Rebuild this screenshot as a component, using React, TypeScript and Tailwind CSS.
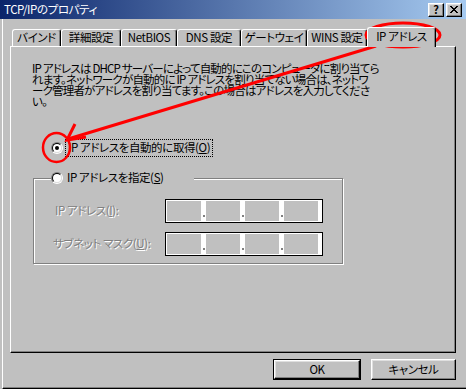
import React from "react";

const font = "font-['MS_UI_Gothic','Noto_Sans_CJK_JP',sans-serif] [font-feature-settings:'palt']";

const raised =
  "border border-t-white border-l-white border-r-black border-b-black shadow-[inset_-1px_-1px_0_#808080,inset_1px_1px_0_#dfdfdf]";

const tabs = [
  { label: "バインド", w: "w-[49px]" },
  { label: "詳細設定", w: "w-[60px]" },
  { label: "NetBIOS", w: "w-[56px]" },
  { label: "DNS 設定", w: "w-[64px]" },
  { label: "ゲートウェイ", w: "w-[66px]" },
  { label: "WINS 設定", w: "w-[60px]" },
];

function Tab({ label, w }: { label: string; w: string }) {
  return (
    <div
      className={`${w} h-[17px] border-t border-l border-r border-t-white border-l-white border-r-black shadow-[inset_-1px_0_0_#808080] rounded-t-[3px] flex items-center justify-center leading-none whitespace-nowrap`}
    >
      {label}
    </div>
  );
}

function Radio({ checked }: { checked?: boolean }) {
  return (
    <span className="w-[12px] h-[12px] shrink-0 rounded-full border border-t-[#808080] border-l-[#808080] border-r-white border-b-white">
      <span className="w-full h-full rounded-full border border-t-black border-l-black border-r-[#dfdfdf] border-b-[#dfdfdf] bg-white flex items-center justify-center">
        {checked && <span className="w-[4px] h-[4px] rounded-full bg-black" />}
      </span>
    </span>
  );
}

function Gap() {
  return (
    <div className="w-[5px] h-full flex items-end pb-[4px] pl-[2px]">
      <span className="w-[2px] h-[2px] bg-[#808080]" />
    </div>
  );
}

function IpField() {
  return (
    <div className="w-[158px] h-[24px] shrink-0 border border-black bg-white p-[1px] flex">
      <div className="w-[34px] h-full bg-[#c0c0c0]" />
      <Gap />
      <div className="w-[34px] h-full bg-[#c0c0c0]" />
      <Gap />
      <div className="w-[34px] h-full bg-[#c0c0c0]" />
      <Gap />
      <div className="w-[34px] h-full bg-[#c0c0c0]" />
    </div>
  );
}

export default function App() {
  return (
    <div className={`relative w-[466px] h-[389px] overflow-hidden bg-[#c0c0c0] text-[11.5px] tracking-[-0.4px] text-black ${font}`}>
      {/* title bar */}
      <div className="h-[19px] flex items-center justify-between pl-[4px] pr-[4px] bg-[linear-gradient(to_right,#0a246a,#a6caf0)]">
        <span className="text-white leading-none">TCP/IPのプロパティ</span>
        <div className="flex gap-[2px]">
          <div className={`w-[16px] h-[14px] bg-[#c0c0c0] flex items-center justify-center font-bold text-[11px] leading-none ${raised}`}>
            ?
          </div>
          <div className={`w-[16px] h-[14px] bg-[#c0c0c0] flex items-center justify-center ${raised}`}>
            <svg width="8" height="7" viewBox="0 0 8 7">
              <path d="M0 0h2v1h1v1h2V1h1V0h2v1H7v1H6v1H5v1h1v1h1v1h1v1H6V6H5V5H3v1H2v1H0V6h1V5h1V4h1V3H2V2H1V1H0z" fill="#000" />
            </svg>
          </div>
        </div>
      </div>

      {/* body */}
      <div className="ml-[2px] h-[370px] border-l border-b border-l-white border-b-black shadow-[inset_0_-1px_0_#808080]">
        {/* tab strip */}
        <div className="pt-[8px] pl-[9px] h-[27px] flex items-end">
          {tabs.map((t) => (
            <Tab key={t.label} label={t.label} w={t.w} />
          ))}
          <div className="relative z-10 w-[69px] h-[20px] -mb-px bg-[#c0c0c0] border-t border-l border-r border-t-white border-l-white border-r-black shadow-[inset_-1px_0_0_#808080] rounded-t-[3px] flex items-center justify-center leading-none pb-[2px] whitespace-nowrap">
            IP アドレス
          </div>
        </div>

        {/* panel */}
        <div className="ml-[7px] w-[446px] h-[307px] border border-t-white border-l-white border-r-black border-b-black shadow-[inset_-1px_-1px_0_#808080]">
          <p className="pl-[21px] pt-[16px] leading-[11px] tracking-[-0.8px] whitespace-nowrap">
            IP アドレスは DHCP サーバーによって自動的にこのコンピュータに割り当てら
            <br />
            れます。ネットワークが自動的に IP アドレスを割り当てない場合は、ネットワ
            <br />
            ーク管理者がアドレスを割り当てます。この場合はアドレスを入力してくださ
            <br />
            い。
          </p>

          <div className="mt-[32px] ml-[40px] h-[18px] flex items-center">
            <Radio checked />
            <span className="ml-[2px] h-[18px] px-[2px] flex items-center border border-dotted border-black leading-none whitespace-nowrap">
              IP アドレスを自動的に取得(<span className="underline">O</span>)
            </span>
          </div>

          <div className="relative mt-[21px] ml-[22px] w-[310px] h-[86px] border border-[#808080] shadow-[inset_1px_1px_0_#fff,1px_1px_0_#fff] pt-[20px] pl-[21px]">
            <div className="absolute left-[17px] -top-[7px] w-[143px] h-[12px] bg-[#c0c0c0] flex items-center">
              <Radio />
              <span className="ml-[4px] leading-none whitespace-nowrap">
                IP アドレスを指定(<span className="underline">S</span>)
              </span>
            </div>
            <div className="flex items-center">
              <span className="w-[110px] text-[#808080] [text-shadow:1px_1px_0_#fff] leading-none whitespace-nowrap">
                IP アドレス(<span className="underline">I</span>):
              </span>
              <IpField />
            </div>
            <div className="mt-[9px] flex items-center">
              <span className="w-[110px] -ml-[2px] mr-[2px] text-[#808080] [text-shadow:1px_1px_0_#fff] leading-none whitespace-nowrap">
                サブネット マスク(<span className="underline">U</span>):
              </span>
              <IpField />
            </div>
          </div>
        </div>

        {/* buttons */}
        <div className="ml-[7px] w-[446px] mt-[6px] flex justify-end gap-[10px]">
          <div className="w-[88px] h-[21px] border border-black">
            <div className={`w-full h-full flex items-center justify-center leading-none ${raised}`}>OK</div>
          </div>
          <div className={`w-[85px] h-[21px] flex items-center justify-center leading-none ${raised}`}>キャンセル</div>
        </div>
      </div>

      {/* red annotation */}
      <svg className="absolute inset-0 pointer-events-none" width="466" height="389" viewBox="0 0 466 389">
        <ellipse cx="403" cy="35" rx="37" ry="12" fill="none" stroke="#ff0000" strokeWidth="3" />
        <ellipse cx="56.5" cy="147.5" rx="13.5" ry="14.5" fill="none" stroke="#ff0000" strokeWidth="2.5" />
        <line x1="376" y1="46" x2="68" y2="139" stroke="#ff0000" strokeWidth="3" />
        <polyline points="75,124 67,140 86,137" fill="none" stroke="#ff0000" strokeWidth="3" />
      </svg>
    </div>
  );
}
